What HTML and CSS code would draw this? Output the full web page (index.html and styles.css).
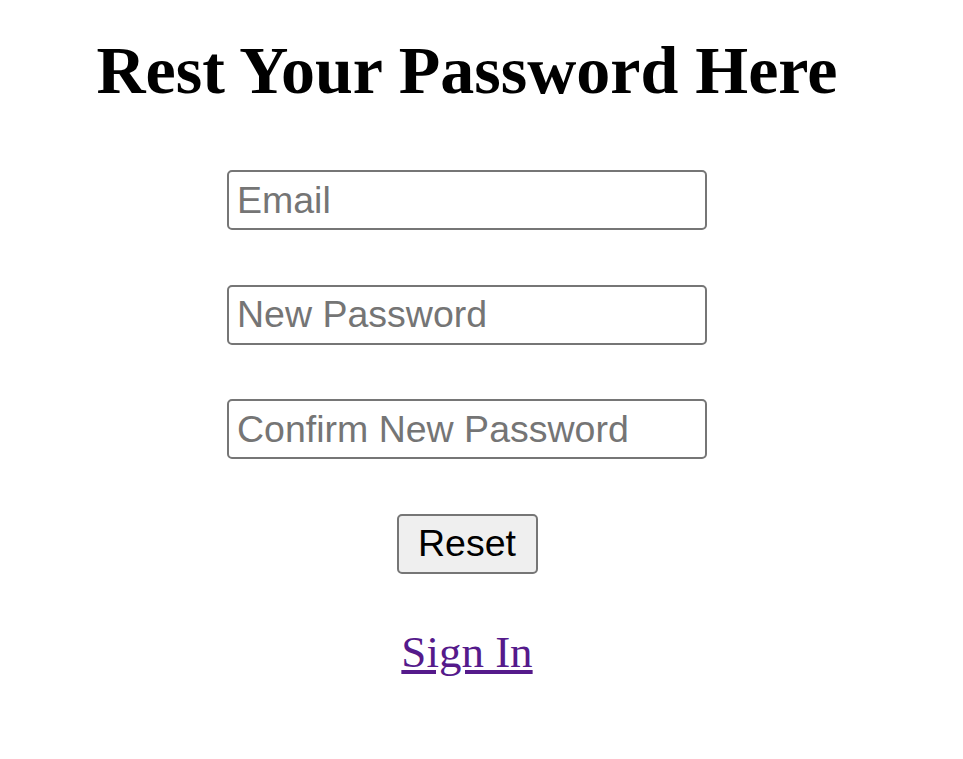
FILE: index.html
```html
<!DOCTYPE html>
<html lang="en">
<head>
  <meta charset="UTF-8">
  <meta name="viewport" content="width=device-width, initial-scale=1.0">
  <title>Reset Password</title>
  <link rel="stylesheet" href="styles.css">
</head>
<body>
  <div class="page">
    <h2>Rest Your Password Here</h2>
    <form class="reset-form">
      <input type="email" placeholder="Email">
      <input type="password" placeholder="New Password">
      <input type="password" placeholder="Confirm New Password">
      <button type="submit">Reset</button>
    </form>
    <p class="signin"><a href="#signin">Sign In</a></p>
  </div>
</body>
</html>
```

FILE: styles.css
```css
body {
  margin: 0;
  font-family: "Liberation Serif", "Times New Roman", serif;
  background-color: #fff;
  color: #000;
}
.page {
  width: 934px;
  text-align: center;
  padding-top: 32px;
}
h2 {
  margin: 0;
  font-size: 68px;
  line-height: 77px;
  font-weight: bold;
}
.reset-form {
  display: flex;
  flex-direction: column;
  align-items: center;
  gap: 54.5px;
  margin-top: 61px;
}
.reset-form input {
  box-sizing: border-box;
  width: 480px;
  height: 60px;
  padding: 0 8px;
  border: 2px solid #767676;
  border-radius: 5px;
  font-family: "Liberation Sans", Arial, sans-serif;
  font-size: 37.5px;
  color: #000;
}
.reset-form input::placeholder {
  color: #757575;
}
.reset-form button {
  box-sizing: border-box;
  width: 141px;
  height: 60px;
  border: 2px solid #767676;
  border-radius: 5px;
  background-color: #efefef;
  font-family: "Liberation Sans", Arial, sans-serif;
  font-size: 37.5px;
  color: #000;
  padding: 0;
}
.signin {
  margin: 52px 0 0;
  font-size: 45px;
}
.signin a {
  color: #551a8b;
}
```
